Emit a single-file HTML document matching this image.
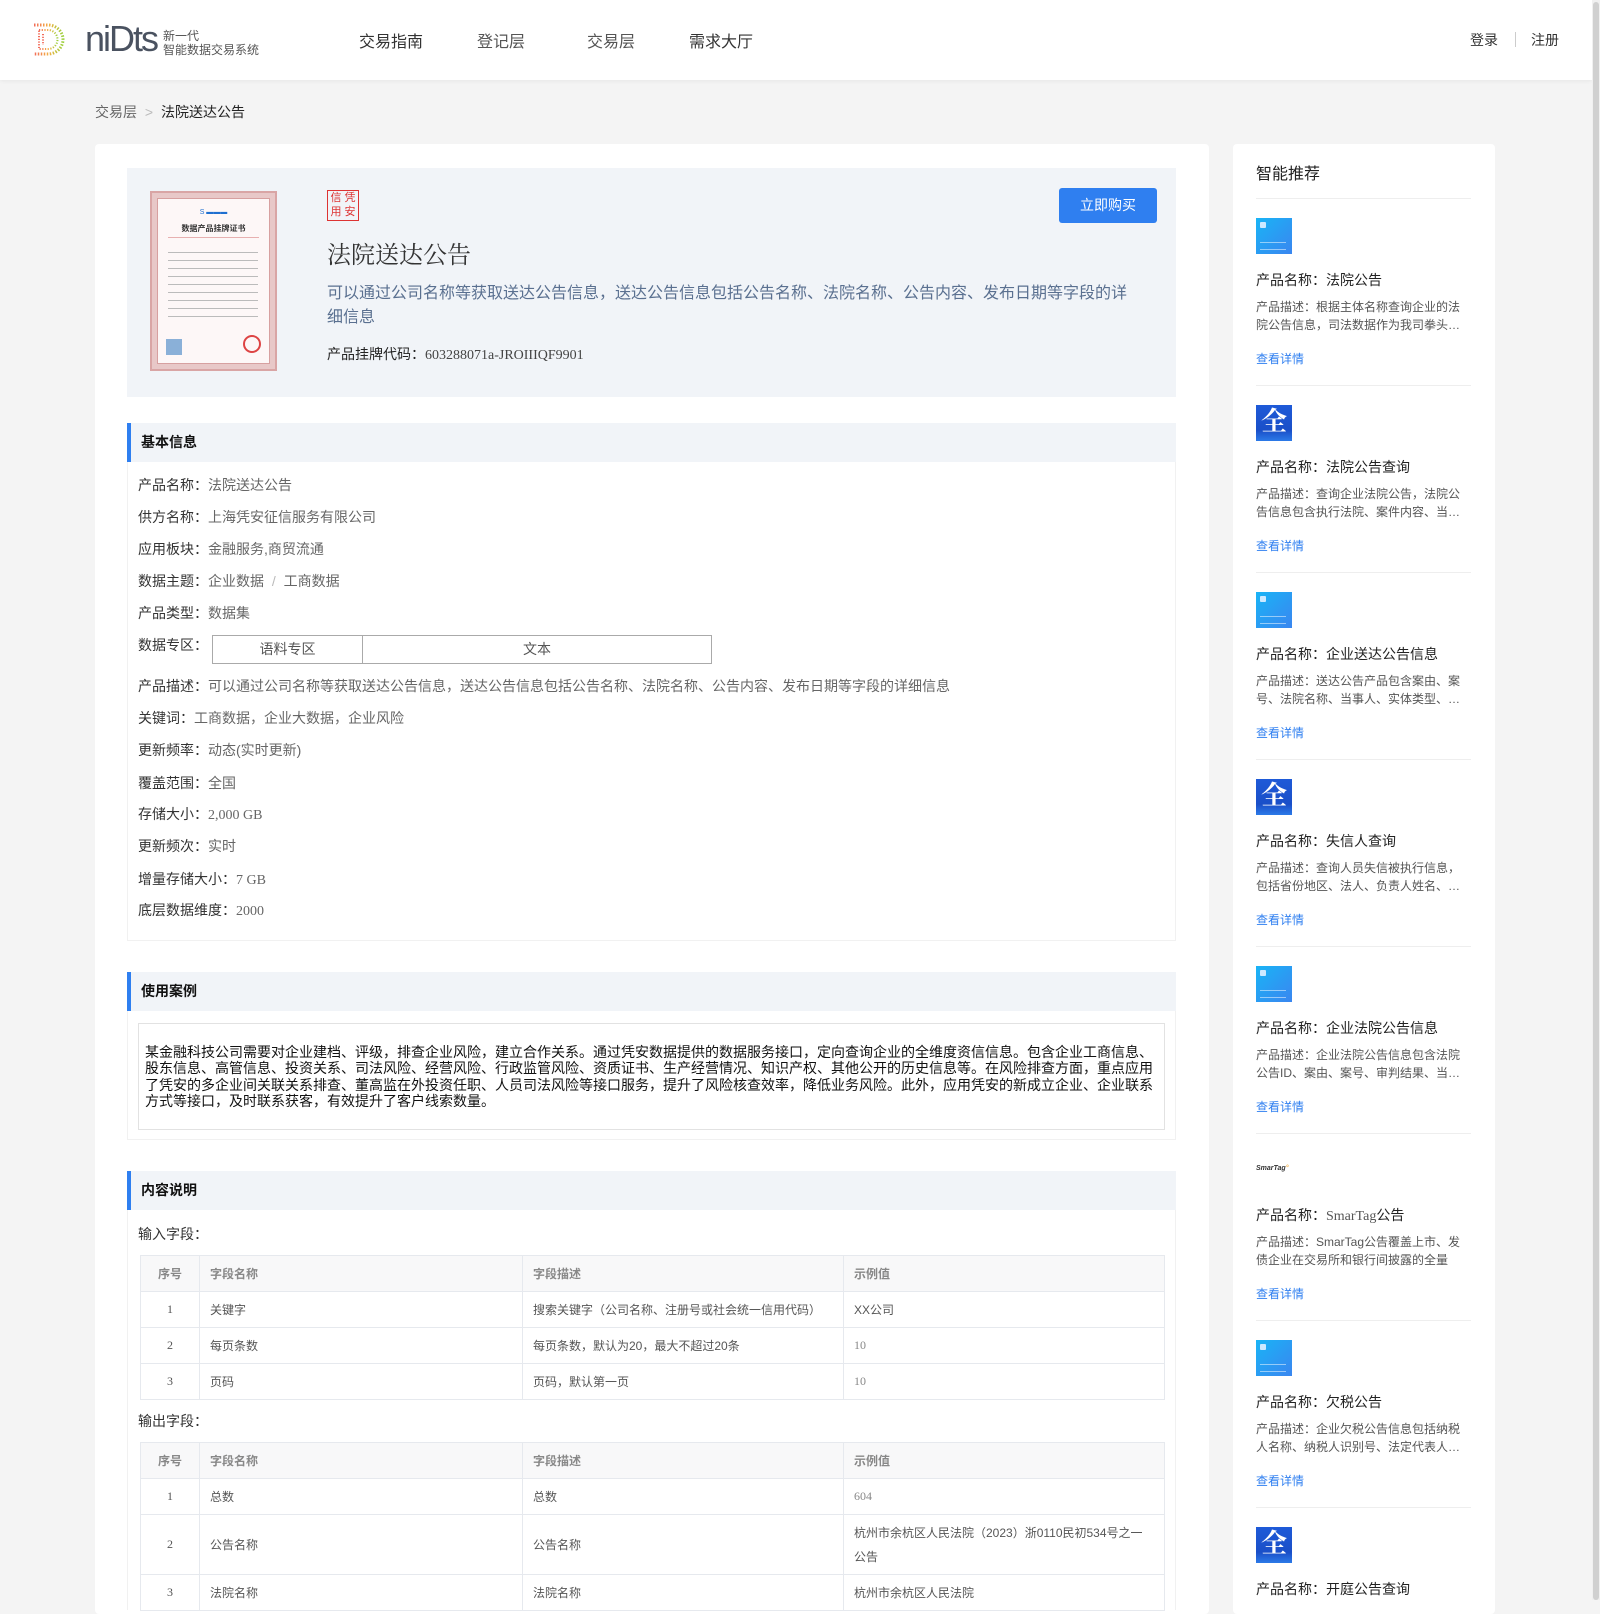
<!DOCTYPE html>
<html><head><meta charset="utf-8">
<style>
*{margin:0;padding:0;box-sizing:border-box}
body{width:1600px;height:1600px;overflow:hidden;background:#f4f4f4;font-family:"Liberation Sans","Noto Sans CJK SC",sans-serif;color:#333;position:relative}
.a{position:absolute;white-space:nowrap}
.hdr{position:absolute;left:0;top:0;width:1592px;height:80px;background:#fff;box-shadow:0 1px 4px rgba(0,0,0,.06)}
.sb{position:absolute;left:1592px;top:0;width:8px;height:1600px;background:#f0f0f0}
.sb i{position:absolute;left:1px;top:2px;width:6px;height:1598px;background:#d0d0d0;border-radius:3px}
.nav{font-size:16px;color:#333;top:28px}
.card{position:absolute;background:#fff;border-radius:4px}
.sec{position:absolute;left:127px;width:1049px;height:39px;background:#f1f4f8;border-left:4px solid #2f7ff0;font-size:14px;font-weight:bold;color:#111;padding-left:10px;line-height:39px}
.lb{font-size:14px;color:#333;left:138px}
.lb span{color:#666}
.serif{font-family:"Liberation Serif","Noto Sans CJK SC",serif}
table{position:absolute;border-collapse:collapse;font-size:12px;color:#555;table-layout:fixed}
td,th{border:1px solid #e6e9ee;padding:0 10px;text-align:left;font-weight:normal}
th{background:#f8f8f9;color:#888;font-weight:bold;height:36px}
td{height:36px}
td:first-child,th:first-child{text-align:center}
.si{position:absolute;left:1256px;width:218px}
.ic{position:absolute;left:0;width:36px;height:36px}
.lt{background:linear-gradient(135deg,#19b4f6,#3a86f0)}
.lt:before{content:"";position:absolute;left:4px;top:4px;width:6px;height:6px;background:#cde9ff;border-radius:1px}
.lt:after{content:"";position:absolute;left:4px;top:24px;width:26px;height:6px;border-top:1px solid rgba(255,255,255,.5);border-bottom:1px solid rgba(255,255,255,.5)}
.qu{background:linear-gradient(180deg,#1e5ad8,#1a4fc8 70%,#2c7ae8);color:#fff;font-family:"Noto Serif CJK SC",serif;font-size:26px;line-height:30px;text-align:center;font-weight:bold}
.nm{position:absolute;left:0;font-size:14px;color:#222;white-space:nowrap}
.ds{position:absolute;left:0;font-size:12px;color:#555;line-height:18px;width:206px;height:36px;overflow:hidden}
.lk{position:absolute;left:0;font-size:12px;color:#2f7ff0}
.dv{position:absolute;left:0;width:215px;height:1px;background:#eee}
</style></head><body>
<div class="hdr">
 <svg class="a" style="left:31px;top:22px" width="37" height="35" viewBox="0 0 37 35">
  <defs><linearGradient id="g" x1="0" x2="1"><stop offset="0" stop-color="#f26b5b"/><stop offset=".5" stop-color="#f4b043"/><stop offset="1" stop-color="#9ad03a"/></linearGradient></defs>
  <path d="M3 3H17A15 14.5 0 0 1 17 32H3" fill="none" stroke="url(#g)" stroke-width="3" stroke-dasharray="1.5 1.5"/>
  <path d="M8 8H17A9.5 9.5 0 0 1 17 27H8Z" fill="none" stroke="url(#g)" stroke-width="2" stroke-dasharray="1.2 1.5"/>
  <path d="M12 12V23" stroke="#f26b5b" stroke-width="2" stroke-dasharray="1.2 1.5"/>
 </svg>
 <div class="a" style="left:85px;top:19px;font-size:36px;color:#4a5260;letter-spacing:-2px;line-height:40px">niDts</div>
 <div class="a" style="left:163px;top:29px;font-size:12px;color:#555;line-height:14px">新一代<br>智能数据交易系统</div>
 <div class="a nav" style="left:359px">交易指南</div>
 <div class="a nav" style="left:477px;color:#555">登记层</div>
 <div class="a nav" style="left:587px;color:#555">交易层</div>
 <div class="a nav" style="left:689px">需求大厅</div>
 <div class="a" style="left:1470px;top:30px;font-size:14px">登录</div>
 <div class="a" style="left:1515px;top:32px;width:1px;height:15px;background:#ccc"></div>
 <div class="a" style="left:1531px;top:30px;font-size:14px">注册</div>
</div>
<div class="sb"><i></i></div>
<div class="a" style="left:95px;top:102px;font-size:14px;color:#666">交易层 <span style="color:#bbb;margin:0 4px">&gt;</span> <span style="color:#222">法院送达公告</span></div>

<div class="card" style="left:95px;top:144px;width:1114px;height:1470px"></div>
<div class="a" style="left:127px;top:168px;width:1049px;height:229px;background:#f1f4f8"></div>
<div class="a" style="left:150px;top:191px;width:127px;height:180px;background:#e8c8c8;border:2px solid #d9a5a5;padding:5px">
 <div style="width:100%;height:100%;background:#fdf7f7;border:1px solid #d7a0a0;position:relative;font-size:8px;color:#333;text-align:center">
  <div style="position:absolute;top:10px;left:0;right:0;font-size:7px;color:#1e6fd0">S ▬▬▬</div>
  <div style="position:absolute;top:24px;left:0;right:0;font-size:8px;font-weight:bold">数据产品挂牌证书</div>
  <div style="position:absolute;top:38px;left:10px;right:10px;height:1px;background:#e7b0b0"></div>
  <div style="position:absolute;top:48px;left:10px;width:90px;height:72px;background:repeating-linear-gradient(#fdf7f7 0 5px,#bbb 5px 6px,#fdf7f7 6px 8px)"></div>
  <div style="position:absolute;bottom:8px;left:8px;width:16px;height:16px;background:#8ab0d8"></div>
  <div style="position:absolute;bottom:10px;right:8px;width:18px;height:18px;border:2px solid #d44;border-radius:50%"></div>
 </div>
</div>
<div class="a" style="left:327px;top:190px;width:32px;height:31px;border:1.5px solid #d33;color:#d33;font-size:11px;line-height:13px;text-align:center;display:grid;grid-template-columns:1fr 1fr;padding:1px">
 <span>信</span><span>凭</span><span>用</span><span>安</span></div>
<div class="a" style="left:327px;top:235px;font-size:24px;color:#333;font-family:'Noto Serif CJK SC',serif">法院送达公告</div>
<div class="a" style="left:327px;top:282px;width:810px;white-space:normal;font-size:16px;line-height:24px;color:#5a7090">可以通过公司名称等获取送达公告信息，送达公告信息包括公告名称、法院名称、公告内容、发布日期等字段的详细信息</div>
<div class="a" style="left:327px;top:344px;font-size:14px;color:#222">产品挂牌代码：<span class="serif" style="color:#444">603288071a-JROIIIQF9901</span></div>
<div class="a" style="left:1059px;top:188px;width:98px;height:35px;background:#2f7ff0;border-radius:3px;color:#fff;font-size:14px;line-height:35px;text-align:center">立即购买</div>

<div class="sec" style="top:423px">基本信息</div>
<div class="a" style="left:127px;top:462px;width:1049px;height:479px;border:1px solid #f1f1f1;border-top:none"></div>
<div class="a lb" style="top:475px">产品名称：<span>法院送达公告</span></div>
<div class="a lb" style="top:507px">供方名称：<span>上海凭安征信服务有限公司</span></div>
<div class="a lb" style="top:539px">应用板块：<span>金融服务,商贸流通</span></div>
<div class="a lb" style="top:571px">数据主题：<span>企业数据 <span style="color:#bbb;margin:0 4px">/</span> 工商数据</span></div>
<div class="a lb" style="top:603px">产品类型：<span>数据集</span></div>
<div class="a lb" style="top:635px">数据专区：</div>
<div class="a" style="left:212px;top:635px;width:500px;height:29px;border:1px solid #aaa;font-size:14px;color:#555;display:flex;line-height:27px">
 <div style="width:150px;border-right:1px solid #aaa;text-align:center">语料专区</div><div style="flex:1;text-align:center">文本</div></div>
<div class="a lb" style="top:676px">产品描述：<span>可以通过公司名称等获取送达公告信息，送达公告信息包括公告名称、法院名称、公告内容、发布日期等字段的详细信息</span></div>
<div class="a lb" style="top:708px">关键词：<span>工商数据，企业大数据，企业风险</span></div>
<div class="a lb" style="top:740px">更新频率：<span>动态(实时更新)</span></div>
<div class="a lb" style="top:773px">覆盖范围：<span>全国</span></div>
<div class="a lb" style="top:804px">存储大小：<span class="serif">2,000 GB</span></div>
<div class="a lb" style="top:836px">更新频次：<span>实时</span></div>
<div class="a lb" style="top:869px">增量存储大小：<span class="serif">7 GB</span></div>
<div class="a lb" style="top:900px">底层数据维度：<span class="serif">2000</span></div>

<div class="sec" style="top:972px">使用案例</div>
<div class="a" style="left:127px;top:1011px;width:1049px;height:129px;border:1px solid #f1f1f1;border-top:none"></div>
<div class="a" style="left:138px;top:1023px;width:1027px;height:107px;border:1px solid #e2e2e2;white-space:normal;padding:20px 8px 0 6px;font-size:14px;line-height:16.3px;color:#111">某金融科技公司需要对企业建档、评级，排查企业风险，建立合作关系。通过凭安数据提供的数据服务接口，定向查询企业的全维度资信信息。包含企业工商信息、股东信息、高管信息、投资关系、司法风险、经营风险、行政监管风险、资质证书、生产经营情况、知识产权、其他公开的历史信息等。在风险排查方面，重点应用了凭安的多企业间关联关系排查、董高监在外投资任职、人员司法风险等接口服务，提升了风险核查效率，降低业务风险。此外，应用凭安的新成立企业、企业联系方式等接口，及时联系获客，有效提升了客户线索数量。</div>

<div class="sec" style="top:1171px">内容说明</div>
<div class="a" style="left:127px;top:1210px;width:1049px;height:400px;border-left:1px solid #f1f1f1;border-right:1px solid #f1f1f1"></div>
<div class="a lb" style="top:1224px">输入字段：</div>
<table style="left:140px;top:1255px;width:1025px">
<colgroup><col style="width:59px"><col style="width:323px"><col style="width:321px"><col></colgroup>
<tr><th>序号</th><th>字段名称</th><th>字段描述</th><th>示例值</th></tr>
<tr><td class="serif">1</td><td>关键字</td><td>搜索关键字（公司名称、注册号或社会统一信用代码）</td><td>XX公司</td></tr>
<tr><td class="serif">2</td><td>每页条数</td><td>每页条数，默认为20，最大不超过20条</td><td class="serif" style="color:#888">10</td></tr>
<tr><td class="serif">3</td><td>页码</td><td>页码，默认第一页</td><td class="serif" style="color:#888">10</td></tr>
</table>
<div class="a lb" style="top:1411px">输出字段：</div>
<table style="left:140px;top:1442px;width:1025px">
<colgroup><col style="width:59px"><col style="width:323px"><col style="width:321px"><col></colgroup>
<tr><th>序号</th><th>字段名称</th><th>字段描述</th><th>示例值</th></tr>
<tr><td class="serif">1</td><td>总数</td><td>总数</td><td class="serif" style="color:#888">604</td></tr>
<tr><td class="serif" style="height:60px">2</td><td>公告名称</td><td>公告名称</td><td style="line-height:24px">杭州市余杭区人民法院（2023）浙0110民初534号之一公告</td></tr>
<tr><td class="serif">3</td><td>法院名称</td><td>法院名称</td><td>杭州市余杭区人民法院</td></tr>
</table>

<div class="card" style="left:1233px;top:144px;width:262px;height:1470px"></div>
<div class="a" style="left:1256px;top:160px;font-size:16px;color:#222">智能推荐</div>
<div class="a" style="left:1256px;top:198px;width:215px;height:1px;background:#eee"></div>

<div class="si" style="top:218px"><div class="ic lt"></div><div class="nm" style="top:52px">产品名称：法院公告</div><div class="ds" style="top:80px">产品描述：根据主体名称查询企业的法院公告信息，司法数据作为我司拳头…</div><div class="lk" style="top:132px">查看详情</div><div class="dv" style="top:167px"></div></div>
<div class="si" style="top:405px"><div class="ic qu">全</div><div class="nm" style="top:52px">产品名称：法院公告查询</div><div class="ds" style="top:80px">产品描述：查询企业法院公告，法院公告信息包含执行法院、案件内容、当…</div><div class="lk" style="top:132px">查看详情</div><div class="dv" style="top:167px"></div></div>
<div class="si" style="top:592px"><div class="ic lt"></div><div class="nm" style="top:52px">产品名称：企业送达公告信息</div><div class="ds" style="top:80px">产品描述：送达公告产品包含案由、案号、法院名称、当事人、实体类型、…</div><div class="lk" style="top:132px">查看详情</div><div class="dv" style="top:167px"></div></div>
<div class="si" style="top:779px"><div class="ic qu">全</div><div class="nm" style="top:52px">产品名称：失信人查询</div><div class="ds" style="top:80px">产品描述：查询人员失信被执行信息，包括省份地区、法人、负责人姓名、…</div><div class="lk" style="top:132px">查看详情</div><div class="dv" style="top:167px"></div></div>
<div class="si" style="top:966px"><div class="ic lt"></div><div class="nm" style="top:52px">产品名称：企业法院公告信息</div><div class="ds" style="top:80px">产品描述：企业法院公告信息包含法院公告ID、案由、案号、审判结果、当…</div><div class="lk" style="top:132px">查看详情</div><div class="dv" style="top:167px"></div></div>
<div class="si" style="top:1153px"><div class="ic" style="top:12px;height:12px;font-size:7px;font-weight:bold;font-style:italic;color:#333;width:40px">SmarTag<span style="color:#f4b043">°</span></div><div class="nm" style="top:52px">产品名称：<span class="serif" style="color:#555">SmarTag</span>公告</div><div class="ds" style="top:80px">产品描述：SmarTag公告覆盖上市、发债企业在交易所和银行间披露的全量公…</div><div class="lk" style="top:132px">查看详情</div><div class="dv" style="top:167px"></div></div>
<div class="si" style="top:1340px"><div class="ic lt"></div><div class="nm" style="top:52px">产品名称：欠税公告</div><div class="ds" style="top:80px">产品描述：企业欠税公告信息包括纳税人名称、纳税人识别号、法定代表人…</div><div class="lk" style="top:132px">查看详情</div><div class="dv" style="top:167px"></div></div>
<div class="si" style="top:1527px"><div class="ic qu">全</div><div class="nm" style="top:52px">产品名称：开庭公告查询</div></div>
</body></html>
